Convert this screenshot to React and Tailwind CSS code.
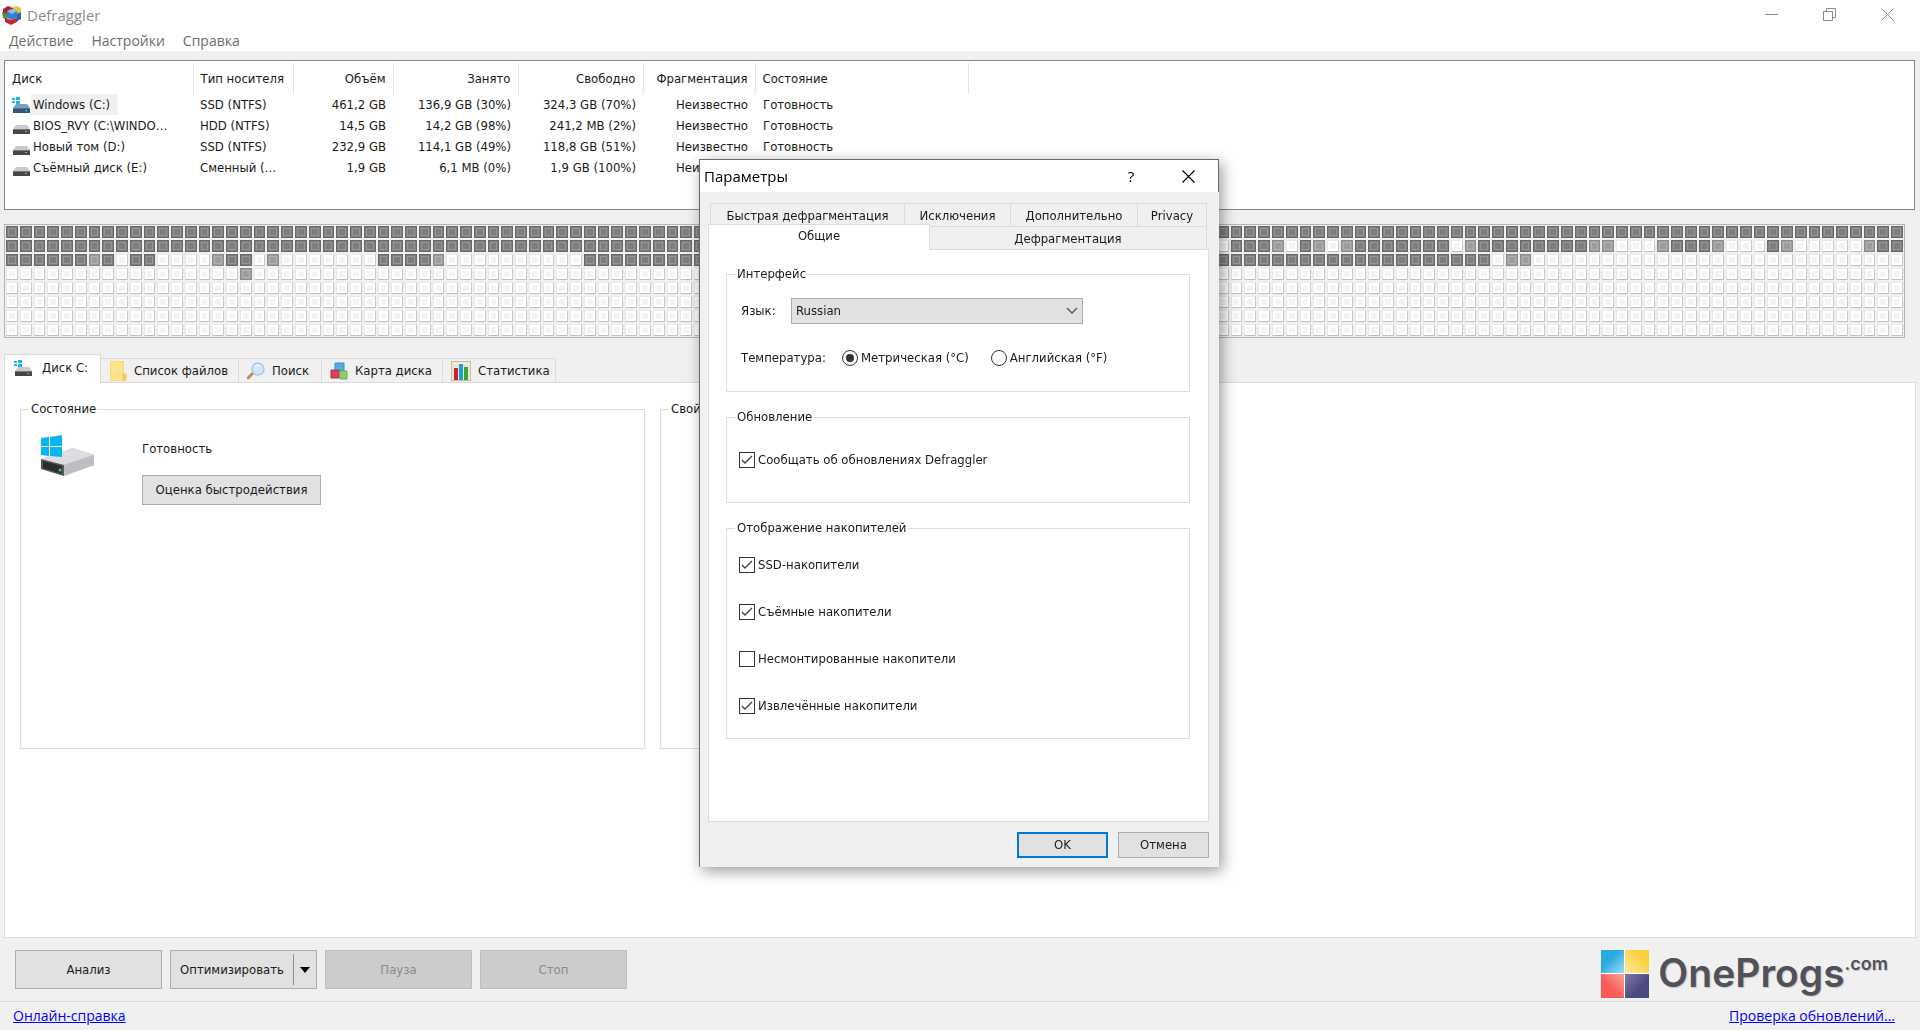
import React, { useState } from 'react';

const disks = [
  { name: 'Windows (C:)', type: 'SSD (NTFS)', size: '461,2 GB', used: '136,9 GB (30%)', free: '324,3 GB (70%)', system: true },
  { name: 'BIOS_RVY (C:\\WINDO…', type: 'HDD (NTFS)', size: '14,5 GB', used: '14,2 GB (98%)', free: '241,2 MB (2%)' },
  { name: 'Новый том (D:)', type: 'SSD (NTFS)', size: '232,9 GB', used: '114,1 GB (49%)', free: '118,8 GB (51%)' },
  { name: 'Съёмный диск (E:)', type: 'Сменный (…', size: '1,9 GB', used: '6,1 MB (0%)', free: '1,9 GB (100%)' },
];

const columns = [
  { label: 'Диск', width: 'w-[188px]', align: 'text-left' },
  { label: 'Тип носителя', width: 'w-[100px]', align: 'text-left' },
  { label: 'Объём', width: 'w-[100px]', align: 'text-right' },
  { label: 'Занято', width: 'w-[125px]', align: 'text-right' },
  { label: 'Свободно', width: 'w-[125px]', align: 'text-right' },
  { label: 'Фрагментация', width: 'w-[112px]', align: 'text-right' },
  { label: 'Состояние', width: 'w-[213px]', align: 'text-left' },
];

// drive map as runs: d = full block, m = partly used, e = empty
const COLS = 138;
const mapRows = [
  [['d', 138]],
  [['d', 88], ['e', 1], ['d', 3], ['m', 1], ['e', 1], ['d', 1], ['m', 1], ['e', 1], ['m', 1], ['d', 7], ['e', 1], ['m', 1], ['d', 8],
    ['m', 2], ['e', 3], ['m', 1], ['d', 3], ['m', 1], ['e', 3], ['d', 1], ['m', 1], ['e', 5], ['m', 1], ['d', 2]],
  [['d', 6], ['m', 1], ['d', 1], ['e', 1], ['d', 2], ['e', 4], ['m', 1], ['d', 2], ['e', 1], ['m', 1], ['e', 7], ['d', 4], ['m', 1],
    ['e', 10], ['d', 66], ['e', 1], ['m', 2], ['e', 27]],
  [['e', 17], ['m', 1], ['e', 120]],
  [['e', COLS]],
  [['e', COLS]],
  [['e', COLS]],
  [['e', COLS]],
];

const blockStyles = {
  d: 'h-3 border border-[#696969] bg-[#7d7d7d] outline outline-[#969696] -outline-offset-3',
  m: 'h-3 border border-[#8c8c8c] bg-[#9d9d9d] outline outline-[#b2b2b2] -outline-offset-3',
  e: 'h-3 border border-t-[#ececec] border-l-[#e8e8e8] border-r-[#c8c8c8] border-b-[#c0c0c0] bg-[#f6f3f3] outline-2 outline-white -outline-offset-3',
};

const blocks = mapRows.flatMap(row => row.flatMap(([kind, n]) => Array(n).fill(kind)));

function AppIcon() {
  return (
    <svg viewBox="0 0 20 20" className="w-5 h-5">
      <path d="M1 4 6 1l5 2v5L6 10 1 8z" fill="#b3202c" />
      <path d="M11 2l4-1 4 2v5l-4 2-4-2z" fill="#e6c53c" />
      <path d="M0 7l5 2v6l-4-2z" fill="#3f9b3c" />
      <path d="M14 9l5-2v7l-5 3z" fill="#3566b5" />
      <path d="M3 13l6 2 6-2v4l-6 3-6-3z" fill="#c8232b" />
      <path d="M5 6l5-2 5 2v7l-5 2-5-2z" fill="#3b7fd0" />
      <path d="M5 6l5-2 5 2-5 3z" fill="#8fc0ee" />
    </svg>
  );
}

function DriveIcon({ system, selected, className = 'w-[18px] h-[18px]' }) {
  return (
    <svg viewBox="0 0 18 18" className={className}>
      <path d="M4 8h11l3 4H1z" fill={selected ? '#7f9fbb' : '#c9cacc'} />
      <rect x="1" y="12" width="17" height="5" fill={selected ? '#31587a' : '#444648'} />
      <rect x="1" y="12" width="17" height="1" fill={selected ? '#4a7396' : '#77797b'} />
      <rect x="13" y="14" width="2" height="1" fill="#3fdc49" />
      {system && <path d="M0 2h3v2H0zM4 1h4v3H4zM0 5h3v2H0zM4 5h4v3H4z" fill="#19b5ee" />}
    </svg>
  );
}

function BigDriveIcon() {
  return (
    <svg viewBox="0 0 54 42" className="w-[54px] h-[42px]">
      <path d="M0 24 32 13l21 7v10L23 41 0 34z" fill="#c8c9cc" />
      <path d="M0 24 32 13l21 7-30 10z" fill="#dcdde0" />
      <path d="M23 30 53 20v10L23 41z" fill="#bdbec2" />
      <path d="M0 24l23 6v11L0 34z" fill="#55585a" />
      <path d="M2 26l19 5v8L2 33z" fill="#2b2d2f" />
      <circle cx="19" cy="35" r="1.5" fill="#3fdc49" />
      <path d="M0 3l8-1v9H0zM9 2l12-2v11H9zM0 12h8v9l-8-1zM9 12h12v10L9 21z" fill="#06b6f1" />
    </svg>
  );
}

function FileIcon() {
  return (
    <svg viewBox="0 0 18 20" className="w-[18px] h-5">
      <path d="M1 0h14v13h2v7H1z" fill="#f7d873" />
      <path d="M2 1h12v18H2z" fill="#fde38b" />
      <path d="M14 13h3v6h-3z" fill="#f4d064" stroke="#e0b94a" strokeWidth=".6" />
    </svg>
  );
}

function SearchIcon() {
  return (
    <svg viewBox="0 0 18 18" className="w-[18px] h-[18px]">
      <path d="M1 16l6-6" stroke="#c98a52" strokeWidth="3" strokeLinecap="round" />
      <circle cx="11" cy="7" r="6" fill="#cfe5fa" stroke="#a8c8e8" strokeWidth="1.5" />
      <path d="M8 5q2-3 5-1" stroke="#f2f9ff" strokeWidth="1.5" fill="none" />
    </svg>
  );
}

function CubesIcon() {
  return (
    <svg viewBox="0 0 18 18" className="w-[18px] h-[18px]">
      <path d="M5 1h9v8H5z" fill="#52aede" stroke="#3d8fbd" />
      <path d="M1 8h8v8H1z" fill="#d8455a" stroke="#b23145" />
      <path d="M10 9h7v8h-7z" fill="#8ecf74" stroke="#6cab54" />
    </svg>
  );
}

function ChartIcon() {
  return (
    <svg viewBox="0 0 20 20" className="w-5 h-5">
      <rect x=".5" y=".5" width="19" height="19" fill="#f3ead9" stroke="#cbb99c" />
      <path d="M0 5h20M0 10h20M0 15h20" stroke="#e0d3bc" />
      <rect x="3" y="7" width="4" height="12" fill="#c7262f" />
      <rect x="8" y="3" width="4" height="16" fill="#1d9fdb" />
      <rect x="13" y="6" width="4" height="13" fill="#37a537" />
    </svg>
  );
}

const tabs = [
  { label: 'Список файлов', icon: FileIcon, width: 'w-[138px]' },
  { label: 'Поиск', icon: SearchIcon, width: 'w-[83px]' },
  { label: 'Карта диска', icon: CubesIcon, width: 'w-[121px]' },
  { label: 'Статистика', icon: ChartIcon, width: 'w-[113px]' },
];

function Group({ title, className = '', children }) {
  return (
    <fieldset className={`min-w-0 border border-[#dcdcdc] ${className}`}>
      <legend className="ml-2 px-[2px] leading-[18px]">{title}</legend>
      {children}
    </fieldset>
  );
}

function Check({ label, defaultChecked }) {
  return (
    <label className="flex h-5 items-center gap-[3px]">
      <span className="grid w-4 h-4">
        <input
          type="checkbox"
          defaultChecked={defaultChecked}
          className="peer col-start-1 row-start-1 w-4 h-4 appearance-none border border-[#333] bg-white"
        />
        <svg viewBox="0 0 16 16" className="invisible peer-checked:visible pointer-events-none col-start-1 row-start-1 w-4 h-4">
          <path d="M3 8l3 3 7-7" fill="none" stroke="#444" strokeWidth="1.4" />
        </svg>
      </span>
      {label}
    </label>
  );
}

function Radio({ label, defaultChecked }) {
  return (
    <label className="flex items-center gap-[3px]">
      <span className="grid w-4 h-4">
        <input
          type="radio"
          name="temperature"
          defaultChecked={defaultChecked}
          className="peer col-start-1 row-start-1 w-4 h-4 appearance-none rounded-full border border-[#333] bg-white"
        />
        <span className="invisible peer-checked:visible pointer-events-none col-start-1 row-start-1 m-1 rounded-full bg-[#333]" />
      </span>
      {label}
    </label>
  );
}

function SettingsDialog({ onClose }) {
  return (
    <div className="fixed inset-0 flex items-center justify-center pb-1 pr-[2px]">
      <div role="dialog" aria-label="Параметры" className="w-[520px] border-t border-l border-[#6a6a6a] bg-[#f0f0f0] shadow-[3px_4px_14px_rgba(0,0,0,0.4)]">
        <div className="flex h-8 items-center bg-white pl-1 pr-5 border-r border-[#6a6a6a] text-black">
          <h2 className="flex-1 font-['Open_Sans','Noto_Sans',sans-serif] text-[15px]">Параметры</h2>
          <button aria-label="Справка" className="w-6 text-[15px] font-['Open_Sans',sans-serif]">?</button>
          <button aria-label="Закрыть" onClick={onClose} className="ml-[35px] flex w-5 justify-center">
            <svg viewBox="0 0 13 13" className="w-[13px] h-[13px]">
              <path d="M.5.5l12 12M12.5.5l-12 12" stroke="#000" strokeWidth="1.1" />
            </svg>
          </button>
        </div>

        <div className="pl-2 pr-[10px] pt-[11px] pb-[9px]">
          <div className="ml-[2px] mr-[2px] flex h-6 border-t border-l border-[#dcdcdc]">
            <button className="w-[194px] border-r border-[#dcdcdc]">Быстрая дефрагментация</button>
            <button className="w-[106px] border-r border-[#dcdcdc]">Исключения</button>
            <button className="w-[127px] border-r border-[#dcdcdc]">Дополнительно</button>
            <button className="flex-1 border-r border-[#dcdcdc]">Privacy</button>
          </div>
          <div className="relative -mt-[3px] -mb-px mr-[2px] flex items-end">
            <button className="h-[26px] w-[222px] border border-b-0 border-[#dcdcdc] bg-white pb-1">Общие</button>
            <button className="h-6 flex-1 border-t border-r border-[#dcdcdc] pt-px">Дефрагментация</button>
          </div>

          <div className="flex h-[573px] flex-col gap-4 border border-[#dcdcdc] bg-white pl-[17px] pr-[18px] pt-[15px]">
            <Group title="Интерфейс">
              <div className="px-[14px] pt-[15px] pb-[23px]">
                <div className="flex h-[26px] items-center">
                  <label htmlFor="language" className="w-[50px]">Язык:</label>
                  <div className="grid w-[292px] items-center">
                    <select
                      id="language"
                      defaultValue="Russian"
                      className="col-start-1 row-start-1 h-[26px] appearance-none border border-[#adadad] bg-[#e1e1e1] pl-1"
                    >
                      <option>Russian</option>
                      <option>English</option>
                    </select>
                    <svg viewBox="0 0 12 8" className="pointer-events-none col-start-1 row-start-1 mr-[5px] w-3 h-2 justify-self-end">
                      <path d="M1 1l5 5 5-5" fill="none" stroke="#555" strokeWidth="1.4" />
                    </svg>
                  </div>
                </div>
                <div className="mt-6 flex h-5 items-center">
                  <span className="w-[101px]">Температура:</span>
                  <div className="flex gap-[22px]">
                    <Radio label="Метрическая (°C)" defaultChecked />
                    <Radio label="Английская (°F)" />
                  </div>
                </div>
              </div>
            </Group>

            <Group title="Обновление">
              <div className="px-3 pt-6 pb-8">
                <Check label="Сообщать об обновлениях Defraggler" defaultChecked />
              </div>
            </Group>

            <Group title="Отображение накопителей">
              <div className="flex flex-col gap-[27px] px-3 pt-[18px] pb-[22px]">
                <Check label="SSD-накопители" defaultChecked />
                <Check label="Съёмные накопители" defaultChecked />
                <Check label="Несмонтированные накопители" />
                <Check label="Извлечённые накопители" defaultChecked />
              </div>
            </Group>
          </div>

          <div className="mt-[10px] flex justify-end gap-[10px]">
            <button onClick={onClose} className="h-[26px] w-[91px] border-2 border-[#0078d7] bg-[#e1e1e1]">OK</button>
            <button onClick={onClose} className="h-[26px] w-[91px] border border-[#adadad] bg-[#e1e1e1]">Отмена</button>
          </div>
        </div>
      </div>
    </div>
  );
}

export default function App() {
  const [open, setOpen] = useState(true);

  return (
    <div className="flex min-h-screen flex-col bg-[#f0f0f0] font-['DejaVu_Sans_Condensed','Noto_Sans',sans-serif] text-[13px] leading-[18px] text-[#1a1a1a]">
      <header className="bg-white font-['Open_Sans','Noto_Sans',sans-serif]">
        <div className="flex h-[29px] items-center pl-[2px] pr-[26px]">
          <AppIcon />
          <h1 className="ml-[5px] flex-1 text-[15px] text-[#8c8c8c]">Defraggler</h1>
          <div className="flex gap-[45px] text-[#8c8c8c]">
            <button aria-label="Свернуть">
              <svg viewBox="0 0 13 13" className="w-[13px] h-[13px]"><path d="M0 6.5h13" stroke="currentColor" /></svg>
            </button>
            <button aria-label="Развернуть">
              <svg viewBox="0 0 13 13" className="w-[13px] h-[13px]">
                <path d="M.5 3.5h9v9h-9zM3.5 3.5v-3h9v9h-3" fill="none" stroke="currentColor" />
              </svg>
            </button>
            <button aria-label="Закрыть">
              <svg viewBox="0 0 13 13" className="w-[13px] h-[13px]"><path d="M.5.5l12 12M12.5.5l-12 12" stroke="currentColor" /></svg>
            </button>
          </div>
        </div>
        <nav className="flex h-[22px] items-center gap-[18px] pl-[9px] pt-[2px] text-[14px] text-[#6d6d6d]">
          <button>Действие</button>
          <button>Настройки</button>
          <button>Справка</button>
        </nav>
      </header>

      <section className="mt-[9px] ml-1 mr-[5px] h-[150px] border border-[#828790] bg-white pt-[2px]">
        <table className="w-[963px] table-fixed border-collapse whitespace-nowrap">
          <thead>
            <tr className="h-[31px]">
              {columns.map(c => (
                <th key={c.label} className={`${c.width} ${c.align} border-r border-[#e5e5e5] px-[7px] font-normal`}>{c.label}</th>
              ))}
            </tr>
          </thead>
          <tbody>
            {disks.map((d, i) => (
              <tr key={d.name} className="h-[21px]">
                <td className="pl-[7px]">
                  <div className="flex items-center">
                    <DriveIcon system={d.system} selected={i === 0} />
                    <span className={i === 0 ? 'ml-px bg-[#f0f0f0] pl-[2px] pr-2 leading-[21px]' : 'ml-[3px]'}>{d.name}</span>
                  </div>
                </td>
                <td className="px-[7px]">{d.type}</td>
                <td className="px-[7px] text-right">{d.size}</td>
                <td className="px-[7px] text-right">{d.used}</td>
                <td className="px-[7px] text-right">{d.free}</td>
                <td className="px-[7px] text-right">Неизвестно</td>
                <td className="px-2">Готовность</td>
              </tr>
            ))}
          </tbody>
        </table>
      </section>

      <section className="mt-[14px] ml-1 mr-[15px] grid grid-cols-[repeat(138,minmax(0,1fr))] gap-[2px] border border-[#b4b4b4] px-px pt-px pb-px">
        {blocks.map((kind, i) => (
          <div key={i} className={blockStyles[kind]} />
        ))}
      </section>

      <nav className="relative mt-4 ml-1 -mb-px flex items-end">
        <button className="flex h-[29px] w-[97px] items-center gap-[10px] border border-b-0 border-[#dcdcdc] bg-white pl-[9px] pb-[2px]">
          <DriveIcon system />
          Диск C:
        </button>
        {tabs.map(t => (
          <button key={t.label} className={`${t.width} mb-px flex h-6 items-center gap-[7px] border-t border-r border-[#dcdcdc] pl-2 whitespace-nowrap`}>
            <t.icon />
            {t.label}
          </button>
        ))}
      </nav>

      <main className="ml-1 mr-1 flex flex-1 border border-[#dcdcdc] bg-white pt-[17px] pl-[15px]">
        <Group title="Состояние" className="h-[349px] w-[625px]">
          <div className="flex items-start gap-[47px] pl-5 pt-[17px]">
            <BigDriveIcon />
            <div className="pt-[5px]">
              <p>Готовность</p>
              <button className="mt-[17px] h-[30px] w-[179px] border border-[#adadad] bg-[#e1e1e1]">Оценка быстродействия</button>
            </div>
          </div>
        </Group>
        <Group title="Свойства" className="ml-[15px] h-[349px] w-[540px]" />
      </main>

      <div className="flex items-start gap-2 pt-3 pl-[15px] pr-8">
        <button className="h-[39px] w-[147px] border border-[#adadad] bg-[#e1e1e1]">Анализ</button>
        <div className="flex h-[39px] w-[147px] items-stretch border border-[#adadad] bg-[#e1e1e1]">
          <button className="flex-1">Оптимизировать</button>
          <button aria-label="Параметры оптимизации" className="my-[3px] flex w-[23px] items-center justify-center border-l border-[#8e8e8e]">
            <svg viewBox="0 0 10 6" className="w-[10px] h-[6px]"><path d="M0 0h10L5 6z" fill="#000" /></svg>
          </button>
        </div>
        <button disabled className="h-[39px] w-[147px] border border-[#bfbfbf] bg-[#ccc] text-[#8a8a8a]">Пауза</button>
        <button disabled className="h-[39px] w-[147px] border border-[#bfbfbf] bg-[#ccc] text-[#8a8a8a]">Стоп</button>
        <div className="ml-auto flex h-[51px] items-start gap-[9px] text-[#50515a]">
          <svg viewBox="0 0 48 48" className="w-12 h-12">
            <defs>
              <linearGradient id="lb" x1="0" y1="0" x2="1" y2="1"><stop offset=".4" stopColor="#29abe2" /><stop offset="1" stopColor="#9fdcf5" /></linearGradient>
              <linearGradient id="ly" x1="1" y1="0" x2="0" y2="1"><stop offset=".3" stopColor="#f8d23c" /><stop offset="1" stopColor="#fdeba0" /></linearGradient>
              <linearGradient id="lr" x1="0" y1="1" x2="1" y2="0"><stop offset=".4" stopColor="#fb5a55" /><stop offset="1" stopColor="#fda29c" /></linearGradient>
              <linearGradient id="lp" x1="1" y1="1" x2="0" y2="0"><stop offset=".4" stopColor="#4d4a80" /><stop offset="1" stopColor="#7f7ca8" /></linearGradient>
            </defs>
            <path d="M0 0h48v48H0z" fill="#fff" />
            <path d="M0 0h23v23H0z" fill="url(#lb)" />
            <path d="M24 0h24v23H24z" fill="url(#ly)" />
            <path d="M0 24h23v24H0z" fill="url(#lr)" />
            <path d="M24 24h24v24H24z" fill="url(#lp)" />
          </svg>
          <div className="flex items-start font-['Inter',sans-serif] font-semibold text-shadow-[1px_1px_1px_#c4c4c4]">
            <span className="text-[39px] leading-[46px]">OneProgs</span>
            <span className="text-[18px] leading-[28px]">.com</span>
          </div>
        </div>
      </div>

      <footer className="flex h-[29px] items-center justify-between border-t border-[#dcdcdc] pl-[13px] pr-[25px] font-['Open_Sans','Noto_Sans',sans-serif] text-[14px] font-medium">
        <a href="#help" className="text-[#0000ff] underline">Онлайн-справка</a>
        <a href="#updates" className="text-[#0000ff] underline">Проверка обновлений...</a>
      </footer>

      {open && <SettingsDialog onClose={() => setOpen(false)} />}
    </div>
  );
}
